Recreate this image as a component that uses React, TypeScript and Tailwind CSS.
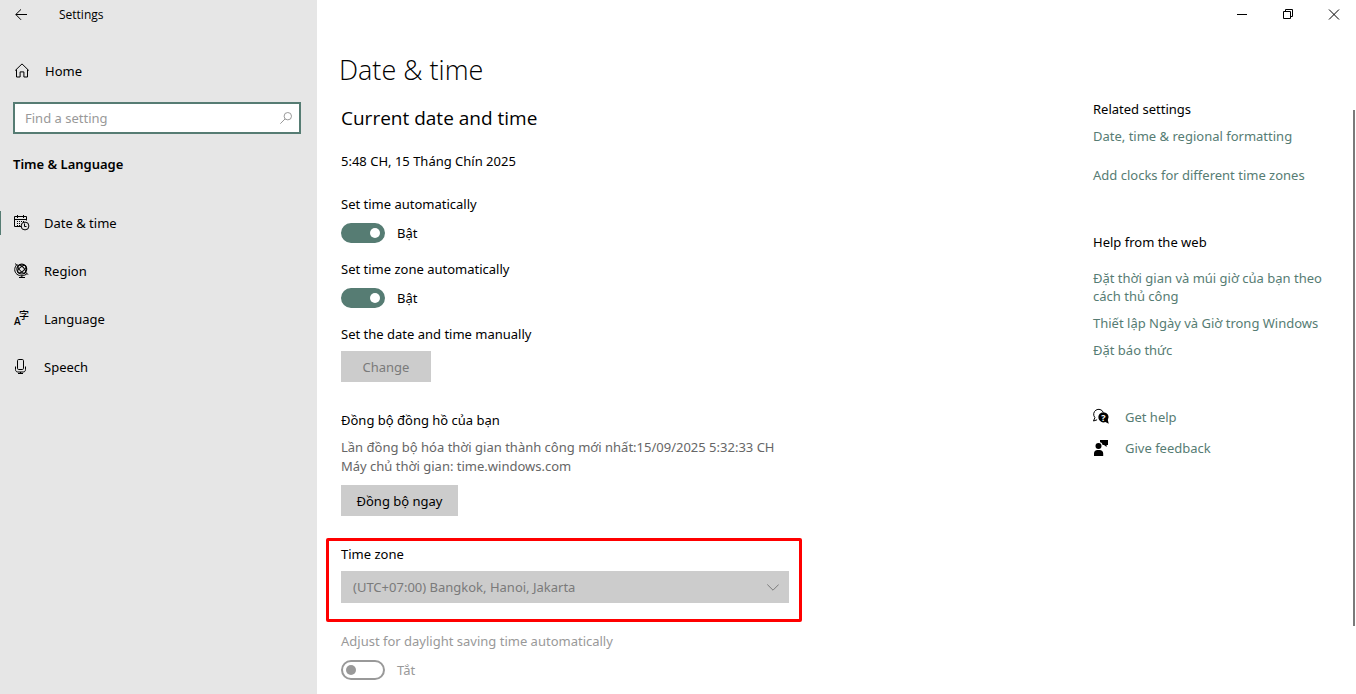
import React from 'react';

interface IconProps {
  children: React.ReactNode;
}

const Icon: React.FC<IconProps> = ({ children }) => (
  <svg
    className="h-4 w-4 flex-shrink-0 overflow-visible"
    viewBox="0 0 16 16"
    fill="none"
    stroke="currentColor"
    aria-hidden="true"
  >
    {children}
  </svg>
);

const HomeIcon = () => (
  <Icon>
    <path d="M1.2 7.5 8 .9 14.8 7.5M2.5 6.5V14h3.6V8.9h3.8V14h3.6V6.5" />
  </Icon>
);

const CalendarIcon = () => (
  <Icon>
    <path d="M7.5 11.5h-7v-10h12v4M.5 4.5h12M3.5 0v3M9.5 0v3" />
    <path d="M3 6.5h7M3 8.5h4M3 10.5h3" strokeDasharray="1 1" />
    <circle cx="11" cy="11" r="3.9" />
    <path d="M10.5 8.5v3h2" />
  </Icon>
);

const GlobeIcon = () => (
  <Icon>
    <circle cx="7.8" cy="6.1" r="4.9" strokeWidth="1.2" />
    <ellipse cx="7.8" cy="6.1" rx="2.2" ry="5" transform="rotate(-40 7.8 6.1)" />
    <ellipse cx="7.8" cy="6.1" rx="2.2" ry="5" transform="rotate(50 7.8 6.1)" />
    <path d="M3.4 1.1C-.4 4.5.2 9.1 3 11.3c2.8 2.2 7.2 2 10.2-.8M1 .5l2.8 2.6M11.6 9.1l2.4 2.6M7.8 12.5v2M5 14.5h6" />
  </Icon>
);

const LanguageIcon = () => (
  <Icon>
    <g fill="currentColor" stroke="none">
      <text x="0" y="14" fontSize="10" fontWeight="600" fontFamily="'Open Sans', sans-serif">
        A
      </text>
      <text x="5" y="8" fontSize="10" fontWeight="500" fontFamily="'Noto Sans CJK JP', sans-serif">
        字
      </text>
    </g>
  </Icon>
);

const MicIcon = () => (
  <Icon>
    <rect x="3.5" y=".5" width="6" height="10" rx="1.2" />
    <path d="M1.5 7.5v3c0 1.5.9 2.5 2.3 2.5h5.4c1.4 0 2.3-1 2.3-2.5v-3M6.5 13v2M4 14.5h5" />
  </Icon>
);

const HelpIcon = () => (
  <Icon>
    <path d="M1.9 8.6A5 5 0 1 1 10.2 3.2M1.9 8.6.5 12l3.6-1.2" />
    <path d="M10.4 3.2a5.1 5.1 0 1 0 2 9.8l3.4 1.7-1-3.6a5.1 5.1 0 0 0-4.4-7.9Z" fill="currentColor" stroke="none" />
    <text x="8.3" y="11.6" fontSize="9" fontWeight="700" fontFamily="'Open Sans', sans-serif" fill="#fff" stroke="none">
      ?
    </text>
  </Icon>
);

const FeedbackIcon = () => (
  <Icon>
    <g fill="currentColor" stroke="none">
      <circle cx="5.5" cy="6" r="3" />
      <path d="M1 16v-2.4C1 11.4 2.4 10 4.4 10h2.2c2 0 3.6 1.4 3.6 3.6V16ZM7 0h8v5h-1.4v2L11 5H9.6C9.4 3.4 8.4 2.4 7 2.2Z" />
    </g>
  </Icon>
);

interface ToggleProps {
  id: string;
  label: string;
  state: string;
  on?: boolean;
  disabled?: boolean;
}

const Toggle: React.FC<ToggleProps> = ({ id, label, state, on = false, disabled = false }) => (
  <div className={disabled ? 'text-[#999999]' : ''}>
    <label htmlFor={id} className="block">
      {label}
    </label>
    <div className="mt-[9px] flex h-5 items-center gap-3">
      <input
        id={id}
        type="checkbox"
        role="switch"
        defaultChecked={on}
        disabled={disabled}
        className="flex h-5 w-11 appearance-none items-center rounded-full border-2 border-[#999999] px-[3px] before:block before:h-2.5 before:w-2.5 before:rounded-full before:bg-[#999999] checked:justify-end checked:border-[#567c73] checked:bg-[#567c73] checked:before:bg-white"
      />
      <span>{state}</span>
    </div>
  </div>
);

const navItems = [
  { label: 'Date & time', icon: <CalendarIcon />, active: true },
  { label: 'Region', icon: <GlobeIcon />, active: false },
  { label: 'Language', icon: <LanguageIcon />, active: false },
  { label: 'Speech', icon: <MicIcon />, active: false },
];

const webLinks = [
  'Đặt thời gian và múi giờ của bạn theo cách thủ công',
  'Thiết lập Ngày và Giờ trong Windows',
  'Đặt báo thức',
];

const Sidebar = () => (
  <aside className="w-[317px] flex-shrink-0 bg-[#e6e6e6]">
    <div className="flex h-[30px] items-center">
      <button type="button" aria-label="Back" className="flex h-7 w-[42px] items-center justify-center">
        <svg className="h-3 w-3" viewBox="0 0 12 12" fill="none" stroke="currentColor" aria-hidden="true">
          <path d="M12 5.5H.8M6 .4.8 5.5 6 10.8" />
        </svg>
      </button>
      <span className="ml-[17px] font-['Open_Sans',sans-serif] text-[12px]">Settings</span>
    </div>
    <a href="#home" className="mt-[21px] flex h-10 items-center gap-[15px] pl-3.5">
      <HomeIcon />
      Home
    </a>
    <div className="ml-[13px] mr-4 mt-[11px] flex h-8 items-center border-2 border-[#567c73] bg-white pr-[7px]">
      <input
        type="text"
        aria-label="Find a setting"
        placeholder="Find a setting"
        className="min-w-0 flex-1 pl-2.5 outline-none placeholder:text-[#999999]"
      />
      <svg className="h-3 w-3 text-[#999999]" viewBox="0 0 12 12" fill="none" stroke="currentColor" aria-hidden="true">
        <circle cx="7.8" cy="4.2" r="3.7" />
        <path d="M5.1 6.9.3 11.7" />
      </svg>
    </div>
    <h2 className="ml-[13px] mt-5 font-semibold">Time &amp; Language</h2>
    <nav className="mt-[25px]">
      {navItems.map((item) => (
        <a key={item.label} href="#section" className="flex h-12 items-center">
          <span className={item.active ? 'h-6 w-px bg-[#567c73]' : 'h-6 w-px'} />
          <span className="ml-[13px] mr-3.5">{item.icon}</span>
          {item.label}
        </a>
      ))}
    </nav>
  </aside>
);

const WindowControls = () => (
  <div className="-mr-px flex h-[30px] justify-end">
    <button type="button" aria-label="Minimize" className="flex w-[46px] items-center justify-center">
      <svg className="h-3 w-3" viewBox="0 0 12 12" fill="none" stroke="currentColor" aria-hidden="true">
        <path d="M1 5.5h10" />
      </svg>
    </button>
    <button type="button" aria-label="Restore" className="flex w-[46px] items-center justify-center">
      <svg className="h-3 w-3" viewBox="0 0 12 12" fill="none" stroke="currentColor" aria-hidden="true">
        <path d="M1.5 2.5h7v7h-7zM3.5 2.5v-2h7v7h-2" />
      </svg>
    </button>
    <button type="button" aria-label="Close" className="flex w-[46px] items-center justify-center">
      <svg className="h-3 w-3" viewBox="0 0 12 12" fill="none" stroke="currentColor" aria-hidden="true">
        <path d="m1 .5 10 10M11 .5l-10 10" />
      </svg>
    </button>
  </div>
);

const DateTimeSettings = () => (
  <section className="min-w-0 flex-1 pb-3 pl-6 pt-5">
    <h1 className="-ml-0.5 font-['Open_Sans',sans-serif] text-[27px] font-light leading-10">Date &amp; time</h1>
    <h2 className="mt-3.5 font-['Open_Sans',sans-serif] text-[19px] leading-7">Current date and time</h2>
    <p className="mt-[19px]">5:48 CH, 15 Tháng Chín 2025</p>

    <div className="mt-[23px] flex flex-col gap-[16px]">
      <Toggle id="auto-time" label="Set time automatically" state="Bật" on />
      <Toggle id="auto-zone" label="Set time zone automatically" state="Bật" on />
    </div>

    <p className="mt-4">Set the date and time manually</p>
    <button type="button" disabled className="mt-[7px] block h-[31px] w-[90px] bg-[#cccccc] text-[#7a7a7a]">
      Change
    </button>

    <h3 className="mt-7">Đồng bộ đồng hồ của bạn</h3>
    <p className="mt-2 leading-[19px] text-[#666666]">
      Lần đồng bộ hóa thời gian thành công mới nhất:15/09/2025 5:32:33 CH
      <br />
      Máy chủ thời gian: time.windows.com
    </p>
    <button type="button" className="mt-[9px] block h-[31px] w-[117px] bg-[#cccccc]">
      Đồng bộ ngay
    </button>

    {/* Highlighted time zone picker */}
    <div className="-ml-[15px] mt-[22px] w-[476px] rounded-xs border-3 border-[#ff0000] px-3 pb-4 pt-[3px]">
      <label htmlFor="time-zone" className="block">
        Time zone
      </label>
      <div className="relative mt-[7px] w-[448px]">
        <select
          id="time-zone"
          disabled
          className="block h-8 w-full appearance-none bg-[#cccccc] pl-3 text-[#7a7a7a]"
        >
          <option>(UTC+07:00) Bangkok, Hanoi, Jakarta</option>
        </select>
        <svg
          className="pointer-events-none absolute right-2.5 top-2.5 h-3 w-3 text-[#7a7a7a]"
          viewBox="0 0 12 12"
          fill="none"
          stroke="currentColor"
          aria-hidden="true"
        >
          <path d="m.3 3.5 5.7 5.7 5.7-5.7" />
        </svg>
      </div>
    </div>

    <div className="mt-[9px]">
      <Toggle id="daylight" label="Adjust for daylight saving time automatically" state="Tắt" disabled />
    </div>
  </section>
);

const RelatedPanel = () => (
  <aside className="w-[263px] flex-shrink-0 pt-[69px]">
    <h3>Related settings</h3>
    <div className="mt-[7px] flex flex-col gap-[19px] text-[#567c73]">
      <a href="#formatting">Date, time &amp; regional formatting</a>
      <a href="#clocks">Add clocks for different time zones</a>
    </div>

    <h3 className="mt-[47px]">Help from the web</h3>
    <div className="mt-[17px] flex flex-col gap-[9px] pr-4 leading-[18px] text-[#567c73]">
      {webLinks.map((link) => (
        <a key={link} href="#help">
          {link}
        </a>
      ))}
    </div>

    <div className="mt-12 flex flex-col gap-[11px]">
      <a href="#get-help" className="flex items-center gap-4">
        <HelpIcon />
        <span className="text-[#567c73]">Get help</span>
      </a>
      <a href="#feedback" className="flex items-center gap-4">
        <FeedbackIcon />
        <span className="text-[#567c73]">Give feedback</span>
      </a>
    </div>
  </aside>
);

export default function App() {
  return (
    <div className="flex min-h-screen overflow-x-clip bg-white font-['Noto_Sans','Open_Sans',sans-serif] text-[13px] leading-5 text-black">
      <Sidebar />
      <main className="min-w-0 flex-1">
        <WindowControls />
        <div className="flex">
          <DateTimeSettings />
          <RelatedPanel />
          {/* Scroll thumb, drawn over the window's right edge */}
          <div className="-ml-[3px] mr-px mt-20 h-[516px] w-0.5 bg-[#7a7a7a]" />
        </div>
      </main>
    </div>
  );
}
